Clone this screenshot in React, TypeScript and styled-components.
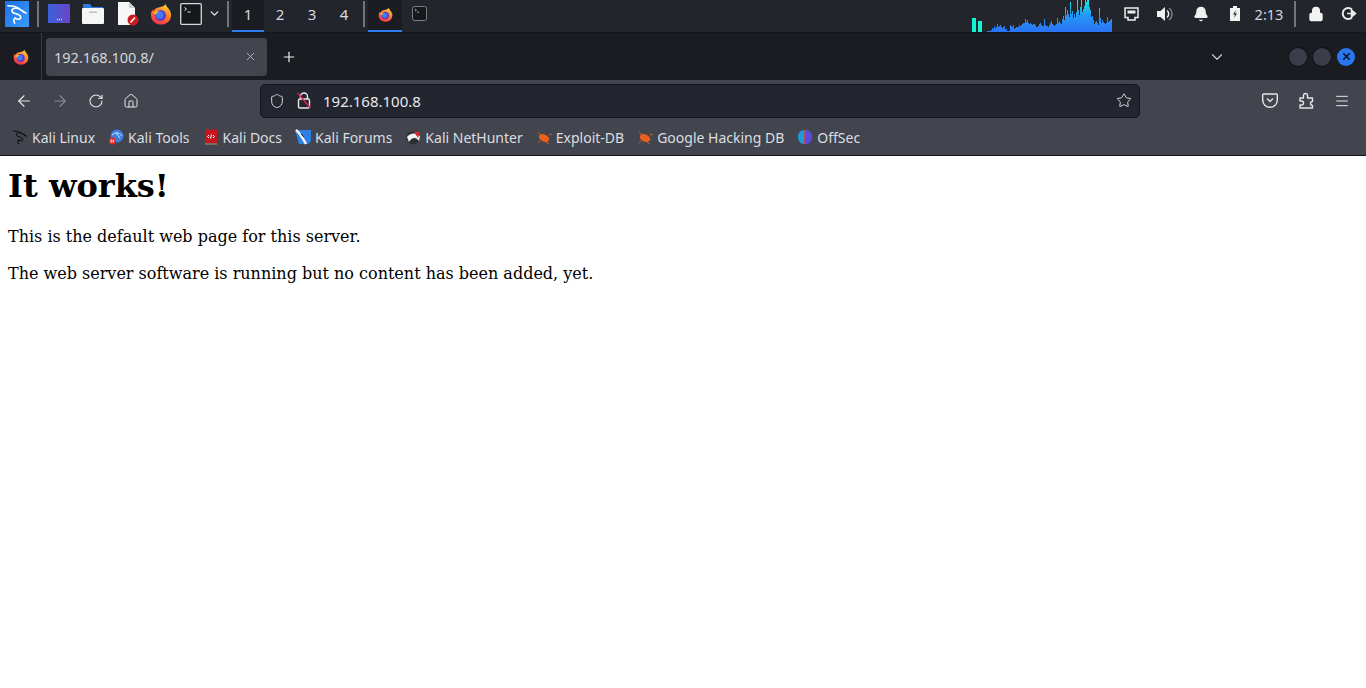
import React from "react";
import styled, { createGlobalStyle } from "styled-components";
import { ArrowLeft, ArrowRight, RotateCw, House, Shield, Star, X, Plus, ChevronDown, Menu, Bell, Lock } from "lucide-react";

const Global = createGlobalStyle`
  html, body { margin: 0; padding: 0; background: #fff; height: 100%; overflow: hidden; }
  * { box-sizing: border-box; }
`;

const Page = styled.div`
  width: 1366px; height: 688px; display: flex; flex-direction: column; background: #fff;
`;

const Panel = styled.header`
  height: 33px; flex: none; display: flex; align-items: stretch; background: #23252d;
  border-bottom: 1px solid #15161a; font-family: "Noto Sans", sans-serif; color: #d5dbe4;
`;
const Slot = styled.div<{ $w: number; $active?: boolean; $line?: boolean }>`
  width: ${p => p.$w}px; flex: none; display: flex; align-items: center; justify-content: center;
  padding-bottom: 3px; font-size: 15px; position: relative;
  background: ${p => (p.$active ? "#1a1c22" : "transparent")};
  border-bottom: 2px solid ${p => (p.$line ? "#2f7df0" : "transparent")};
  padding-top: ${p => (p.$line ? 1 : 0)}px;
`;
const Sep = styled.div`
  width: 2px; height: 26px; background: #72757b;
`;
const Spacer = styled.div` flex: 1; `;
const Spectrum = styled.svg`
  width: 140px; height: 32px; flex: none; display: block;
`;
const Clock = styled.span`
  font-size: 14.5px; letter-spacing: 0; color: #cfd6df;
`;

const TabBar = styled.div`
  height: 47px; flex: none; display: flex; align-items: center; background: #1b1c22;
  font-family: "Noto Sans", sans-serif; color: #dfe0e3; position: relative;
`;
const TabSlot = styled.div`
  width: 42px; height: 100%; flex: none; display: flex; align-items: center; justify-content: center;
  border-right: 1px solid #3a3c42; padding-bottom: 0;
`;
const Tab = styled.div`
  margin-left: 4px; width: 221px; height: 38px; background: #42454e; border-radius: 4px;
  display: flex; align-items: center; justify-content: space-between; padding: 0 10px 0 8px;
  font-size: 14.5px; color: #d5d6da;
  svg { color: #c6c8cc; }
`;
const NewTab = styled.div`
  width: 44px; flex: none; display: flex; align-items: center; justify-content: center; color: #eee;
`;
const TabRight = styled.div`
  margin-left: auto; display: flex; align-items: center; padding-right: 11px; color: #d6d6d8;
`;
const WinBtn = styled.div<{ $close?: boolean }>`
  width: 18px; height: 18px; border-radius: 50%; margin-left: 6px; display: flex; align-items: center; justify-content: center;
  background: ${p => (p.$close ? "#2a76ee" : "#3a3e4a")};
  box-shadow: ${p => (p.$close ? "none" : "0 0 0 1px #111217")};
  color: #0d1220;
`;
const AllTabs = styled.div`
  margin-right: 57px; display: flex;
`;

const Toolbar = styled.div`
  height: 41px; flex: none; display: flex; align-items: center; background: #42454e;
  color: #e6e6e8; font-family: "Noto Sans", sans-serif; padding-left: 6px;
`;
const ToolBtn = styled.div<{ $w?: number; $dim?: boolean }>`
  width: ${p => p.$w ?? 36}px; height: 34px; flex: none; display: flex; align-items: center; justify-content: center;
  color: ${p => (p.$dim ? "#8b8d93" : "#e6e6e8")};
`;
const UrlBar = styled.div`
  margin-left: 112px; width: 880px; height: 34px; background: #23252f; border: 1px solid #16171c;
  border-radius: 5px; display: flex; align-items: center; padding: 0 7px 0 8px; font-size: 15px; color: #e8e9ec;
`;
const UrlText = styled.span`
  flex: 1; margin-left: 9px;
`;
const UrlIcon = styled.div<{ $w: number }>`
  width: ${p => p.$w}px; flex: none; display: flex; align-items: center; justify-content: center; color: #d8d9dc;
`;
const ToolRight = styled.div`
  margin-left: auto; display: flex; padding-right: 6px;
`;

const Bookmarks = styled.nav`
  height: 35px; flex: none; display: flex; align-items: center; gap: 13px; padding: 0 0 2px 12px;
  background: #42454e; border-bottom: 1px solid #111217;
  font-family: "Noto Sans", sans-serif; font-size: 14px; color: #dcdde0;
`;
const Bookmark = styled.a`
  display: flex; align-items: center; gap: 4px; white-space: nowrap;
  svg { flex: none; display: block; }
`;

const Content = styled.main`
  flex: 1; padding: 8px; color: #000; font-family: "DejaVu Serif", serif; font-size: 16px; background: #fff;
`;
const Title = styled.h1`
  font-size: 32px; font-weight: 700; margin: 0 0 21px; line-height: 38px; padding-top: 3px;
`;
const Para = styled.p`
  margin: 0 0 16px; line-height: 21px;
`;

const FirefoxIcon = ({ s = 22 }: { s?: number }) => (
  <svg width={s} height={s} viewBox="0 0 24 24">
    <defs>
      <linearGradient id="ffa" x1="0.7" y1="0" x2="0.2" y2="1">
        <stop offset="0" stopColor="#ffd13a" />
        <stop offset="0.45" stopColor="#ff7a28" />
        <stop offset="1" stopColor="#f0284e" />
      </linearGradient>
    </defs>
    <path d="M17 1c.6 2.4 2.2 3.4 3.6 5.6C22.4 9.4 23 11 23 13c0 6-4.9 10.5-11 10.5S1 19 1 13c0-2.4.7-4.4 1.8-6 .2 1 .6 1.5 1.2 2 .4-1.500 1.400-2.500 2.800-3.200C9 4.500 9.800 5 11.500 4.400 14.500 3.800 16.500 2.500 17 1z" fill="url(#ffa)" />
    <circle cx="11.500" cy="13.500" r="6" fill="#5b3bd0" />
    <circle cx="10.500" cy="13" r="4" fill="#3f7df5" />
    <path d="M3 11c2-2 5-2.500 7-1.500 -2 .5 -3 1.500-3.500 3.500C5.500 12 4 11.500 3 11z" fill="#ffb63a" />
  </svg>
);

const KaliDragon = ({ s = 20, c = "#fff", w = 1.7 }: { s?: number; c?: string; w?: number }) => (
  <svg width={s} height={s} viewBox="0 0 24 24" fill="none" stroke={c} strokeWidth={w} strokeLinecap="round" strokeLinejoin="round">
    <path d="M2 3c4 0 8 .5 11 2.500 3 1.800 5 3.500 9 5.500" />
    <path d="M14 6c-4-1-8 0-7.500 3 .5 3 9 2.500 9.500 6 .4 3-3.500 3.500-6 1.500" />
    <path d="M10 16.500c-1.500 1-2 3-.5 5.500" />
    <path d="M17 8c1 .3 1.500.8 2 1.800" />
  </svg>
);

const TerminalIcon = ({ s = 22, dim }: { s?: number; dim?: boolean }) => (
  <svg width={s} height={s} viewBox="0 0 22 22">
    <rect x="0.7" y="0.7" width="20.600" height="20.600" rx={dim ? 3 : 1} fill="#17181c" stroke={dim ? "#8b8d92" : "#d8d8d8"} strokeWidth="1.300" />
    <path d="M4.500 4.500l2 1.500-2 1.500M7.500 9h3" stroke="#eee" strokeWidth="1" fill="none" />
  </svg>
);

const heights = [0,1,1,1,1,2,4,3,6,4,5,8,5,6,7,5,4,5,6,3,3,1,1,1,7,6,5,7,3,4,5,5,5,7,6,7,8,9,9,13,10,12,9,8,9,8,7,8,8,7,5,5,6,8,9,7,6,6,13,7,6,6,5,7,9,11,8,7,6,7,8,14,9,11,9,8,13,16,12,25,17,22,18,15,30,18,21,14,18,15,20,32,22,17,25,32,20,23,26,32,30,32,33,25,22,15,16,12,8,10,11,9,7,24,14,9,12,10,9,8,9,15,10,11,12,13];

const Spec = () => {
  const d = heights.map((h, i) => `M${14 + i} 32h1v${-h}h-1z`).join("");
  return (
    <Spectrum viewBox="0 0 140 32">
      <defs>
        <linearGradient id="spec" x1="0" y1="1" x2="0" y2="0">
          <stop offset="0" stopColor="#2a73f5" />
          <stop offset="0.5" stopColor="#2596f5" />
          <stop offset="1" stopColor="#14f0e0" />
        </linearGradient>
      </defs>
      <rect x="0" y="18" width="4" height="14" fill="#12f5d0" />
      <rect x="6" y="21" width="4" height="11" fill="#12f5d0" />
      <path d={d} fill="url(#spec)" />
    </Spectrum>
  );
};

const bookmarkIcons: Record<string, React.ReactNode> = {
  linux: <KaliDragon s={16} c="#111" w={1.6} />,
  tools: (
    <svg width="16" height="16" viewBox="0 0 16 16">
      <circle cx="9" cy="7" r="6.500" fill="#3e7fe0" />
      <path d="M4 6c3-3 7-3 10 1M8 4l4 5" stroke="#cfe2ff" strokeWidth="1" fill="none" />
      <rect x="1" y="8.500" width="6.500" height="7" rx="2" fill="#d8282c" />
      <path d="M3.200 10.500v3M5.200 10.500v3" stroke="#fff" strokeWidth="1" />
    </svg>
  ),
  docs: (
    <svg width="16" height="16" viewBox="0 0 16 16">
      <rect x="2" y="0.500" width="12" height="14" fill="#c8141c" />
      <rect x="2" y="14" width="12" height="2" fill="#7c6a5c" />
      <path d="M6 6L4.500 7.500 6 9M10 6l1.500 1.500L10 9M8.500 5.500l-1 4" stroke="#fff" strokeWidth="1" fill="none" />
    </svg>
  ),
  forums: (
    <svg width="16" height="16" viewBox="0 0 16 16">
      <path d="M2 1h14v11l-3 3H4L0 1z" fill="#2d7fe6" />
      <path d="M1 1c4 3 6 7 10 14" stroke="#f4f4f4" strokeWidth="2.400" fill="none" />
      <path d="M6 5l3 3" stroke="#222" strokeWidth="1" />
    </svg>
  ),
  nethunter: (
    <svg width="16" height="16" viewBox="0 0 16 16">
      <circle cx="8" cy="9" r="6.500" fill="#2b2d33" />
      <path d="M2 8c3-4 8-5 13-1l-1 5C11 8 7 8 4 13z" fill="#f2f2f2" />
      <path d="M9 3l6 0-2 6z" fill="#d8282c" />
    </svg>
  ),
  exploit: (
    <svg width="16" height="16" viewBox="0 0 16 16">
      <ellipse cx="8" cy="9" rx="5.500" ry="3.600" transform="rotate(25 8 9)" fill="#e8601c" />
      <path d="M2 3l4 4M13 6l3-1M10 13l3 2M4 12l-2 2" stroke="#d9571a" strokeWidth="1" />
    </svg>
  ),
  offsec: (
    <svg width="16" height="16" viewBox="0 0 16 16">
      <path d="M7 1C3 1 1 4.500 1 8s2 7 6 7z" fill="#1d9bd8" />
      <path d="M9 1c4 0 6 3.500 6 7s-2 7-6 7z" fill="#5a4bd8" />
      <rect x="7.300" y="1" width="1.400" height="14" fill="#d94a68" />
    </svg>
  ),
};

const items = [
  ["linux", "Kali Linux"], ["tools", "Kali Tools"], ["docs", "Kali Docs"], ["forums", "Kali Forums"],
  ["nethunter", "Kali NetHunter"], ["exploit", "Exploit-DB"], ["exploit", "Google Hacking DB"], ["offsec", "OffSec"],
];

export default function App() {
  return (
    <Page>
      <Global />
      <Panel>
        <Slot $w={34}>
          <svg width="24" height="26" viewBox="0 0 24 26">
            <defs>
              <linearGradient id="kb" x1="0" y1="0" x2="1" y2="1"><stop offset="0" stopColor="#1f6fe8" /><stop offset="1" stopColor="#3a9bfa" /></linearGradient>
            </defs>
            <rect width="24" height="26" rx="1" fill="url(#kb)" />
            <g transform="translate(1 2)"><KaliDragon s={22} /></g>
          </svg>
        </Slot>
        <Slot $w={8}><Sep /></Slot>
        <Slot $w={34}>
          <svg width="22" height="19" viewBox="0 0 22 19">
            <defs>
              <linearGradient id="wk" x1="0" y1="0" x2="1" y2="0"><stop offset="0" stopColor="#3a62d8" /><stop offset="1" stopColor="#6a45c8" /></linearGradient>
            </defs>
            <rect width="22" height="19" fill="url(#wk)" />
            <path d="M9 15.500h1M11 15.500h1M13 15.500h1" stroke="#dde" strokeWidth="1.400" />
          </svg>
        </Slot>
        <Slot $w={34}>
          <svg width="22" height="20" viewBox="0 0 22 20">
            <path d="M1 0h7l2 3h11v4H1z" fill="#2e7be8" />
            <rect y="4" width="22" height="16" rx="1" fill="#f6f6f6" />
            <rect x="7" y="7.500" width="8" height="1.400" fill="#bbb" />
          </svg>
        </Slot>
        <Slot $w={35}>
          <svg width="22" height="24" viewBox="0 0 22 24">
            <path d="M1 0h11l6 6v17H1z" fill="#f7f7f7" />
            <path d="M12 0l6 6h-6z" fill="#cfcfcf" />
            <circle cx="16" cy="18" r="5.500" fill="#cc1b22" />
            <path d="M13.500 20.500l4.500-5" stroke="#fff" strokeWidth="1.500" />
          </svg>
        </Slot>
        <Slot $w={32}><FirefoxIcon /></Slot>
        <Slot $w={28}><TerminalIcon /></Slot>
        <Slot $w={18}><ChevronDown size={13} strokeWidth={2.500} color="#e5e5e5" /></Slot>
        <Slot $w={9}><Sep /></Slot>
        <Slot $w={32} $active $line>1</Slot>
        <Slot $w={32}>2</Slot>
        <Slot $w={32}>3</Slot>
        <Slot $w={32}>4</Slot>
        <Slot $w={8}><Sep /></Slot>
        <Slot $w={34} $active $line><FirefoxIcon s={15} /></Slot>
        <Slot $w={34}><TerminalIcon s={15} dim /></Slot>
        <Spacer />
        <Spec />
        <Slot $w={38}>
          <svg width="15" height="14" viewBox="0 0 15 14" fill="none">
            <path d="M1 1h13v9.500h-3V13H4v-2.500H1z" stroke="#eee" strokeWidth="1.500" />
            <path d="M3.500 3.500h8v3h-8z" fill="#eee" />
          </svg>
        </Slot>
        <Slot $w={30}>
          <svg width="18" height="18" viewBox="0 0 18 18">
            <path d="M1 6h3.500L9 2v14l-4.500-4H1z" fill="#f0f0f0" />
            <path d="M11 5.500a4.500 4.500 0 0 1 0 7" stroke="#f0f0f0" strokeWidth="1.500" fill="none" />
            <path d="M13 3a7.500 7.500 0 0 1 0 12" stroke="#777" strokeWidth="1.500" fill="none" />
          </svg>
        </Slot>
        <Slot $w={42}><Bell size={16} fill="#f0f0f0" color="#f0f0f0" /></Slot>
        <Slot $w={26}>
          <svg width="10" height="15" viewBox="0 0 10 15">
            <path d="M0 2h3V0h4v2h3v13H0z" fill="#f2f2f2" />
            <path d="M6 4L3 8.500h2L4 12l3-4.500H5z" fill="#23252d" />
          </svg>
        </Slot>
        <Slot $w={42}><Clock>2:13</Clock></Slot>
        <Slot $w={10}><Sep /></Slot>
        <Slot $w={32}><Lock size={16} fill="#f2f2f2" color="#f2f2f2" strokeWidth={2} /></Slot>
        <Slot $w={34}>
          <svg width="16" height="15" viewBox="0 0 16 15" fill="none">
            <path d="M11 3.500A5.500 5.500 0 1 0 11 11.500" stroke="#eaeaea" strokeWidth="2" />
            <path d="M6 7.500h6M10.500 4l4 3.500-4 3.500z" stroke="#eaeaea" strokeWidth="1.500" fill="#eaeaea" />
          </svg>
        </Slot>
      </Panel>

      <TabBar>
        <TabSlot><FirefoxIcon s={16} /></TabSlot>
        <Tab>
          192.168.100.8/
          <X size={13} strokeWidth={1.500} />
        </Tab>
        <NewTab><Plus size={16} strokeWidth={1.800} /></NewTab>
        <TabRight>
          <AllTabs><ChevronDown size={18} strokeWidth={1.500} /></AllTabs>
          <WinBtn />
          <WinBtn />
          <WinBtn $close><X size={11} strokeWidth={3.500} /></WinBtn>
        </TabRight>
      </TabBar>

      <Toolbar>
        <ToolBtn><ArrowLeft size={18} strokeWidth={1.500} /></ToolBtn>
        <ToolBtn $dim><ArrowRight size={18} strokeWidth={1.500} /></ToolBtn>
        <ToolBtn><RotateCw size={16} strokeWidth={1.600} /></ToolBtn>
        <ToolBtn $w={34}><House size={16} strokeWidth={1.500} /></ToolBtn>
        <UrlBar>
          <UrlIcon $w={16}><Shield size={16} strokeWidth={1.500} /></UrlIcon>
          <UrlIcon $w={38}>
            <svg width="16" height="17" viewBox="0 0 16 17" fill="none">
              <path d="M4.500 7V4.500a3.500 3.500 0 0 1 7 0V7" stroke="#e8e8ea" strokeWidth="1.400" />
              <rect x="2.500" y="7" width="11" height="9" rx="1.500" stroke="#e8e8ea" strokeWidth="1.400" />
              <path d="M1.500 1l13 15" stroke="#e0234e" strokeWidth="1.400" />
            </svg>
          </UrlIcon>
          <UrlText style={{ marginLeft: 0 }}>192.168.100.8</UrlText>
          <UrlIcon $w={16}><Star size={17} strokeWidth={1.500} /></UrlIcon>
        </UrlBar>
        <ToolRight>
          <ToolBtn>
            <svg width="16" height="15" viewBox="0 0 16 15" fill="none" stroke="#e6e6e8" strokeWidth="1.400">
              <path d="M1.500 1h13a.8.800 0 0 1 .8.800V7a7.300 7.300 0 0 1-14.600 0V1.800a.8.800 0 0 1 .8-.8z" />
              <path d="M5 5.500l3 3 3-3" />
            </svg>
          </ToolBtn>
          <ToolBtn>
            <svg width="15" height="17" viewBox="0 0 15 17" fill="none" stroke="#e6e6e8" strokeWidth="1.400" strokeLinejoin="round">
              <path d="M1 6h3.500V3.500a2 2 0 0 1 4 0V6H13.500v3.500a2 2 0 0 0 0 4V16H1v-3h1.500a2 2 0 0 0 0-4H1z" />
            </svg>
          </ToolBtn>
          <ToolBtn><Menu size={16} strokeWidth={1.500} /></ToolBtn>
        </ToolRight>
      </Toolbar>

      <Bookmarks>
        {items.map(([k, label]) => (
          <Bookmark key={label}>{bookmarkIcons[k]}{label}</Bookmark>
        ))}
      </Bookmarks>

      <Content>
        <Title>It works!</Title>
        <Para>This is the default web page for this server.</Para>
        <Para>The web server software is running but no content has been added, yet.</Para>
      </Content>
    </Page>
  );
}
